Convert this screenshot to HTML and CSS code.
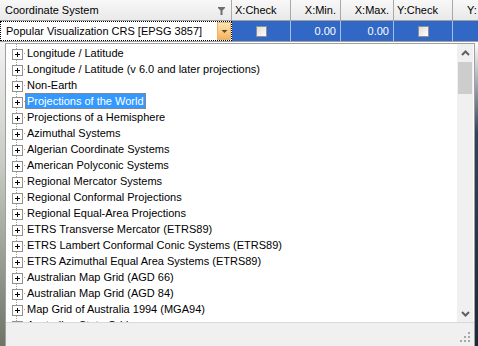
FILE: index.html
```html
<!DOCTYPE html>
<html lang="en">
<head>
  <meta charset="UTF-8">
  <meta name="viewport" content="width=device-width, initial-scale=1.0">
  <title>Coordinate System Picker</title>
  <link rel="stylesheet" href="styles.css">
</head>
<body>
  <div class="grid">
    <!-- Column headers -->
    <div class="head">
      <div class="hc c-name">
        <span>Coordinate System</span>
        <svg class="funnel" width="7" height="8" viewBox="0 0 7 8"><path d="M0 0h7v1L4.5 3.5V8h-2V3.5L0 1z" fill="#6e6e6e"/></svg>
      </div>
      <div class="hc c-chk">X:Check</div>
      <div class="hc c-min num">X:Min.</div>
      <div class="hc c-max num">X:Max.</div>
      <div class="hc c-chk2">Y:Check</div>
      <div class="hc c-last">Y:</div>
    </div>

    <!-- Selected row -->
    <div class="row">
      <div class="cell c-name editor">
        <span>Popular Visualization CRS [EPSG 3857]</span>
        <span class="drop-btn">
          <svg width="7" height="5" viewBox="0 0 7 5"><path d="M0.5 1h6L3.5 4z" fill="#5a4a2e"/></svg>
        </span>
      </div>
      <div class="cell c-chk"><span class="check"></span></div>
      <div class="cell c-min num">0.00</div>
      <div class="cell c-max num">0.00</div>
      <div class="cell c-chk2"><span class="check"></span></div>
      <div class="cell c-last"></div>
    </div>

    <!-- Dropdown list -->
    <div class="below">
      <div class="backdrop-left"></div>
      <div class="popup">
        <div class="list">
          <ul class="tree">
            <li><span class="twig"></span><span class="label">Longitude / Latitude</span></li>
            <li><span class="twig"></span><span class="label">Longitude / Latitude (v 6.0 and later projections)</span></li>
            <li><span class="twig"></span><span class="label">Non-Earth</span></li>
            <li><span class="twig"></span><span class="label selected">Projections of the World</span></li>
            <li><span class="twig"></span><span class="label">Projections of a Hemisphere</span></li>
            <li><span class="twig"></span><span class="label">Azimuthal Systems</span></li>
            <li><span class="twig"></span><span class="label">Algerian Coordinate Systems</span></li>
            <li><span class="twig"></span><span class="label">American Polyconic Systems</span></li>
            <li><span class="twig"></span><span class="label">Regional Mercator Systems</span></li>
            <li><span class="twig"></span><span class="label">Regional Conformal Projections</span></li>
            <li><span class="twig"></span><span class="label">Regional Equal-Area Projections</span></li>
            <li><span class="twig"></span><span class="label">ETRS Transverse Mercator (ETRS89)</span></li>
            <li><span class="twig"></span><span class="label">ETRS Lambert Conformal Conic Systems (ETRS89)</span></li>
            <li><span class="twig"></span><span class="label">ETRS Azimuthal Equal Area Systems (ETRS89)</span></li>
            <li><span class="twig"></span><span class="label">Australian Map Grid (AGD 66)</span></li>
            <li><span class="twig"></span><span class="label">Australian Map Grid (AGD 84)</span></li>
            <li><span class="twig"></span><span class="label">Map Grid of Australia 1994 (MGA94)</span></li>
            <li><span class="twig"></span><span class="label">Australian State Grid</span></li>
          </ul>
          <div class="vscroll">
            <span class="arrow">
              <svg width="9" height="6" viewBox="0 0 9 6"><path d="M1 5L4.5 1.5L8 5" fill="none" stroke="#606060" stroke-width="2"/></svg>
            </span>
            <span class="thumb"></span>
            <span class="track"></span>
            <span class="arrow">
              <svg width="9" height="6" viewBox="0 0 9 6"><path d="M1 1L4.5 4.5L8 1" fill="none" stroke="#606060" stroke-width="2"/></svg>
            </span>
          </div>
        </div>
        <div class="grip-bar">
          <svg class="grip" width="11" height="11" viewBox="0 0 11 11" fill="#a8a8a8">
            <rect x="8" y="0" width="2" height="2"/>
            <rect x="4" y="4" width="2" height="2"/><rect x="8" y="4" width="2" height="2"/>
            <rect x="0" y="8" width="2" height="2"/><rect x="4" y="8" width="2" height="2"/><rect x="8" y="8" width="2" height="2"/>
          </svg>
        </div>
      </div>
      <div class="backdrop-right"></div>
    </div>
  </div>
</body>
</html>
```

FILE: styles.css
```css
/* General */
* {
  box-sizing: border-box;
}

html, body {
  margin: 0;
  height: 100%;
  overflow: hidden;
}

body {
  font-family: 'Liberation Sans', Arial, sans-serif;
  font-size: 11px;
  color: #000;
  background: #ffffff;
}

.grid {
  display: flex;
  flex-direction: column;
  width: 478px;
  height: 346px;
}

/* Column widths */
.c-name { width: 232px; }
.c-chk  { width: 59px; }
.c-min  { width: 50px; }
.c-max  { width: 53px; }
.c-chk2 { width: 59px; }
.c-last { flex: 1; }

/* Header */
.head {
  display: flex;
  height: 21px;
  border-bottom: 1px solid #a0a0a0;
  background: linear-gradient(#f8f8f8, #e9e9e9);
}

.hc {
  display: flex;
  align-items: center;
  padding: 0 3px;
  border-right: 1px solid #a9a9a9;
  white-space: nowrap;
  overflow: hidden;
}

.hc.c-name {
  padding-left: 5px;
  justify-content: space-between;
}

.funnel {
  margin-right: 3px;
  margin-top: 2px;
}

.hc.num {
  justify-content: flex-end;
  padding-right: 4px;
}

.hc.c-last {
  border-right: none;
  padding-left: 14px;
}

/* Selected row */
.row {
  display: flex;
  height: 21px;
  border-bottom: 1px solid #a0a0a0;
  background: #3168c6;
  color: #ffffff;
}

.cell {
  display: flex;
  align-items: center;
  justify-content: center;
  border-right: 1px solid #a7bde6;
}

.cell.num {
  justify-content: flex-end;
  padding-right: 4px;
}

.cell.c-last {
  border-right: none;
}

.editor {
  justify-content: space-between;
  padding-left: 5px;
  background: #ffffff;
  color: #000;
  border: 1px dotted #000;
}

.drop-btn {
  display: flex;
  align-items: center;
  justify-content: center;
  width: 14px;
  height: 18px;
  background: linear-gradient(#fde6b2, #f5b35c);
  border: 1px solid #e9b46a;
}

.check {
  width: 11px;
  height: 11px;
  border: 1px solid #8e8f8f;
  background: linear-gradient(135deg, #dcdcdc, #ffffff);
}

/* Area under the grid */
.below {
  flex: 1;
  display: flex;
  padding-top: 1px;
  min-height: 0;
}

.backdrop-left {
  width: 5px;
  margin-top: -1px;
  background: linear-gradient(#f2f2f2, #c8ccc4 40%, #6e7566);
}

.backdrop-right {
  width: 3px;
  margin-top: -1px;
  background: linear-gradient(#ffffff, #2f4458 30%, #1c2a36);
}

/* Dropdown popup */
.popup {
  width: 470px;
  display: flex;
  flex-direction: column;
  border: 1px solid #a0a0a0;
  border-bottom: none;
  background: #ffffff;
}

.list {
  flex: 1;
  display: flex;
  min-height: 0;
  padding-right: 1px;
  border-bottom: 1px solid #d9d9d9;
}

/* Tree */
.tree {
  flex: 1;
  list-style: none;
  margin: 0;
  padding: 1px 0 0 0;
  overflow: hidden;
  background: repeating-linear-gradient(to bottom, #a0a0a0 0 1px, transparent 1px 2px) 10px 0 / 1px 100% no-repeat;
}

.tree li {
  display: flex;
  align-items: center;
  height: 16px;
  white-space: nowrap;
}

.twig {
  position: relative;
  width: 20px;
  height: 16px;
  margin-left: 6px;
  flex: none;
}

/* expander box */
.twig::before {
  content: '';
  position: absolute;
  left: 0;
  top: 4px;
  width: 9px;
  height: 9px;
  border: 1px solid #919191;
  background:
    linear-gradient(#000, #000) center / 5px 1px no-repeat,
    linear-gradient(#000, #000) center / 1px 5px no-repeat,
    #ffffff;
}

/* horizontal connector */
.twig::after {
  content: '';
  position: absolute;
  left: 10px;
  top: 8px;
  width: 4px;
  height: 1px;
  background: repeating-linear-gradient(to right, #a0a0a0 0 1px, transparent 1px 2px);
}

.label {
  margin-left: -7px;
  padding: 0 1px;
  line-height: 14px;
  border: 1px solid transparent;
}

.label.selected {
  background: #3399ff;
  color: #ffffff;
  border: 1px dotted #c87a2a;
}

/* Vertical scrollbar */
.vscroll {
  width: 16px;
  display: flex;
  flex-direction: column;
  background: #f0f0f0;
}

.arrow {
  height: 17px;
  display: flex;
  align-items: center;
  justify-content: center;
}

.thumb {
  height: 32px;
  margin: 1px 1px 0;
  background: #cdcdcd;
}

.track {
  flex: 1;
}

/* Resize grip bar */
.grip-bar {
  height: 23px;
  display: flex;
  justify-content: flex-end;
  align-items: flex-end;
  padding: 0 3px 3px 0;
  background: #f0f0f0;
}
```
